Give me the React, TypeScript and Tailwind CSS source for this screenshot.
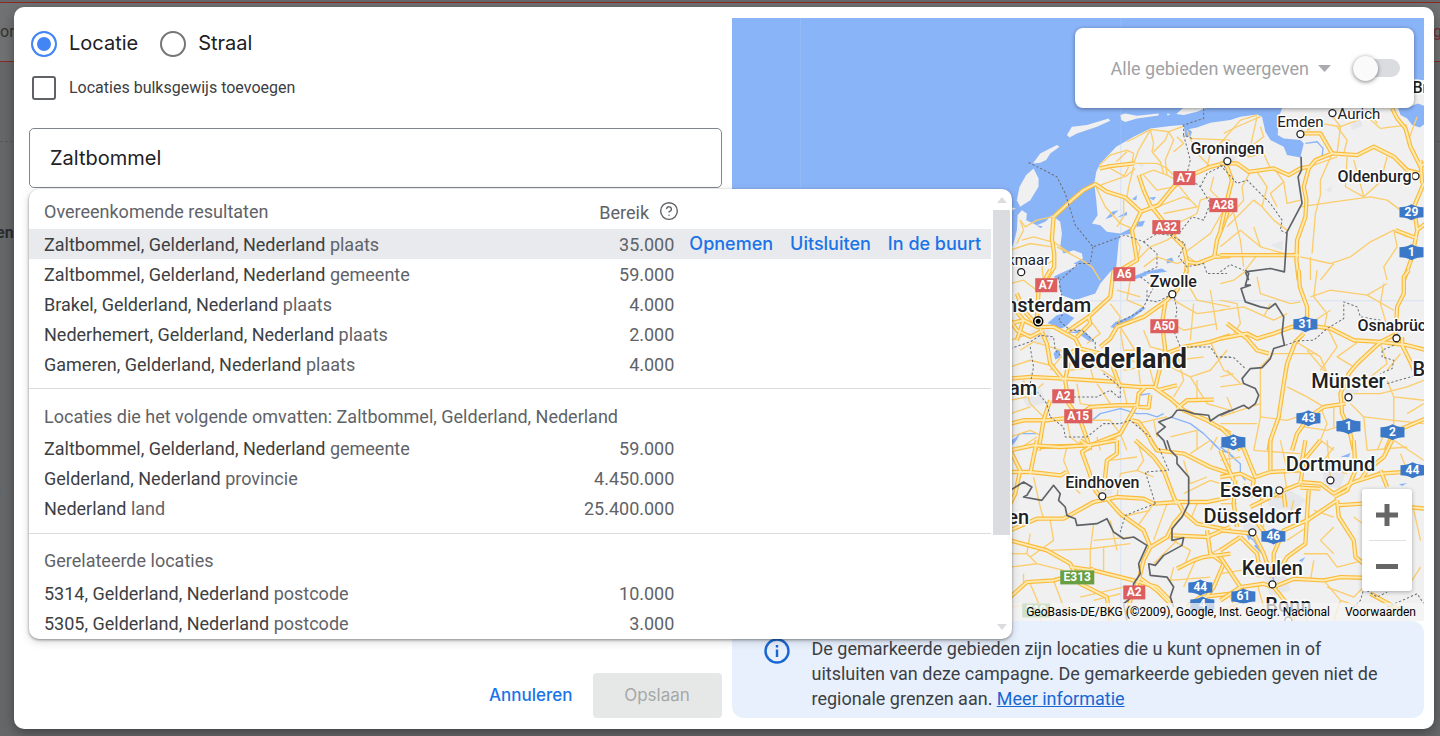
import React, { useState } from 'react';
import { HelpCircle } from "lucide-react";

interface Tile {
  x: number;
  y: number;
  highways: string[];
  roads: string[];
  borders: string[];
  provinces: string[];
  rivers: string[];
  lakes: string[];
}

interface Place {
  name: string;
  x: number;
  y: number;
  size: number;
  weight?: number;
  anchor?: "start" | "middle" | "end";
  dot?: [number, number];
}

interface Shield {
  label: string;
  x: number;
  y: number;
  kind: "red" | "blue" | "green";
}

interface Result {
  name: string;
  type: string;
  reach: string;
}

// Tile coordinates are in thirds of a map unit
const tiles: Tile[] = [
  {
    x: 1010,
    y: 100,
    highways: [
      "130,350 190,295 220,270 255,252 290,275 345,292 392,335 365,390 380,480 345,500 310,525",
      "268,205 300,198 372,190",
      "385,225 400,270 420,315 460,365 490,410 520,440 530,485 526,540",
      "392,335 445,315 490,260 520,235 600,200 640,190 660,190",
      "130,350 125,415 132,460 132,500 105,545",
      "660,310 640,370 620,420 612,470",
      "530,485 560,490 612,470 660,468",
    ],
    roads: [
      "268,195 300,165 350,150 370,160 365,190", "318,185 350,155", "300,205 345,230 375,205",
      "375,190 440,190 470,205 500,235", "390,225 430,210 470,225 500,240", "350,125 380,110 420,88 475,95",
      "370,190 385,150 420,90", "420,88 430,130 425,155 450,185 460,220", "430,155 465,120 475,95 520,78",
      "475,95 490,120 465,180 470,225", "490,155 520,130 500,110", "530,90 540,115 660,120",
      "255,255 285,320 330,370 365,385", "340,290 340,350 320,380", "370,200 355,260 350,290",
      "270,255 340,230 355,200", "400,225 440,270 490,260", "440,320 520,290 540,300 500,250",
      "460,340 560,320 540,300", "490,410 500,370 560,340 570,300 600,290", "610,230 600,270 630,300 660,290",
      "560,490 520,460 600,400 640,330", "380,480 420,440 470,420 500,400", "400,500 440,470 500,490 526,480",
      "380,480 390,440 370,410", "30,360 45,380 80,360 125,350", "20,430 40,390 30,360",
      "35,420 70,410 125,425", "0,450 60,430 125,440", "100,540 95,500 130,480", "130,425 180,460",
      "140,440 215,480 245,500 270,540", "640,120 600,160 590,200", "540,115 560,160 600,200",
    ],
    borders: [],
    provinces: [
      "55,187 140,230 165,280 195,375 248,440 345,405 400,425 440,400 480,405 510,395 545,350 580,360 600,310 570,260 530,230",
      "248,440 240,490 205,490 150,540", "520,105 540,180 530,220",
      "580,25 580,55 520,75 520,105 545,115", "570,260 590,220 640,195 660,230",
      "400,425 440,460 440,500 400,520", "480,405 525,430 505,470 530,500 580,490 590,520 650,520",
    ],
    rivers: [],
    lakes: [
      "365,297 380,285 378,300", "415,293 437,290 430,300", "285,357 305,335 325,330 305,350",
      "320,352 350,335 350,345", "382,365 404,362 397,378 378,380", "468,478 485,472 490,485 470,490",
      "78,375 97,378 92,384", "520,75 545,95 540,110 525,108", "400,515 455,505 470,515 410,522",
    ],
  },
  {
    x: 1220,
    y: 0,
    highways: [
      "0,490 50,490 85,515 160,505 205,525 240,505 265,500",
      "515,325 530,355 555,385 570,440 600,500 612,490",
      "230,400 300,400 335,460 285,480 265,505 250,560 258,600 255,650 230,720 228,780 235,840",
      "335,460 410,465 460,440 520,470 560,510 600,520", "0,765 235,765",
      "0,690 20,600 35,540 20,500", "615,670 590,690 575,770 550,840", "610,550 580,620 590,690",
      "600,480 605,550", "525,690 590,715",
    ],
    roads: [
      "0,430 60,360 110,345", "10,400 50,380 120,350", "30,450 90,440 110,350", "90,440 130,410 120,380",
      "0,455 45,430 85,470 130,460 150,505", "90,515 65,560 70,600 0,680", "110,515 140,560 125,620 160,660 200,690",
      "165,510 190,545 150,580 170,620", "190,545 200,610 240,600", "240,770 330,790 390,770 450,725 520,690 560,710",
      "520,690 530,740 490,800 500,840", "265,500 350,470", "300,585 285,640 275,760", "240,620 340,605 450,590 500,600 540,630 570,660",
      "380,470 375,560 430,590 480,545 500,470", "335,460 300,540 300,585", "350,380 380,420 370,460",
      "260,390 300,370 360,380 440,350 480,385 560,375", "30,600 60,720 70,800", "0,740 60,690 120,740 190,760",
      "100,680 120,740", "20,680 100,600 125,620", "330,340 360,380 350,460", "430,590 400,480",
      "270,770 270,840", "340,790 300,840", "590,350 560,430", "75,810 110,765", "445,330 470,370",
    ],
    borders: ["242,470 243,510 233,530 245,610 200,695 192,815 150,805 75,815 85,840"],
    provinces: ["0,495 50,550 80,540 150,610 185,660 180,690 200,700", "0,815 30,793 70,810"],
    rivers: ["255,430 290,425 308,445 305,468"],
    lakes: ["532,322 560,322 592,310 612,318 612,372 598,382 575,375 560,355 540,345"],
  },
  {
    x: 1010,
    y: 270,
    highways: [
      "310,0 300,80 235,140 170,185", "0,160 40,150 80,170 130,170 195,205 210,235 270,250",
      "0,150 20,180 60,200 100,180", "90,175 110,220 120,280 160,330", "0,325 60,320 160,325 240,330 320,335",
      "320,345 385,350 430,350 480,385 520,420 590,450 660,490", "270,230 300,205 320,170 400,140 470,90 500,60 530,0",
      "465,95 455,160 465,240 450,290 435,350", "465,250 520,230 600,215 660,195", "300,270 330,350",
      "200,235 180,250 165,330 175,400 210,450 235,520 240,540", "380,410 385,370 405,350",
      "420,375 415,412 385,410", "380,405 320,405 240,410 200,440 110,450 40,450 0,460",
      "120,390 100,450 85,540", "80,530 240,525 330,490 375,410", "365,450 385,455 410,490 440,540",
      "500,415 530,390 610,388", "440,360 500,345", "0,100 40,150 20,210", "120,0 85,60 80,150",
      "20,70 40,120 80,165", "235,140 240,160 200,200",
    ],
    roads: [
      "0,210 60,190", "30,240 70,215 120,230", "0,290 60,270 120,285", "40,330 60,400 110,450", "0,390 50,380 100,340",
      "160,250 120,300", "230,250 250,330", "180,300 260,290 320,330", "240,150 270,190 230,220", "300,100 330,140 320,170",
      "330,0 360,30 350,90", "350,90 400,110", "320,60 390,80", "400,180 420,230 460,240", "330,180 340,240 400,240",
      "330,170 380,250 390,340", "340,300 450,280", "500,250 520,330 490,380", "480,290 540,320 600,300 650,240",
      "540,320 590,400 660,420", "600,215 640,300 660,310", "520,20 560,90 660,110", "490,90 560,130 640,120",
      "470,150 520,180 620,160", "550,100 540,210", "600,60 620,180", "0,500 60,480 100,500", "20,540 80,500",
      "240,450 300,450 330,490", "260,500 270,540", "330,490 350,540", "380,460 470,440", "480,500 560,480 560,540",
      "620,500 600,540", "430,450 440,500", "0,430 60,410", "260,340 300,400", "340,355 350,400", "0,40 40,30 80,60",
      "170,450 180,500 220,530", "60,350 0,370", "200,340 210,400 270,410", "560,330 560,390", "500,270 580,260",
      "410,260 430,340", "270,250 330,260 390,280", "120,230 180,250",
    ],
    borders: ["660,420 625,435 600,452 595,435 550,430 520,420 500,420 485,440 445,455 465,470 440,490 460,510 470,540"],
    provinces: [
      "145,20 155,80 165,120 145,150 180,180 215,180 255,215 255,240", "0,235 60,215 90,195 130,200 135,240 165,270",
      "60,230 70,290 60,340 110,400 120,440", "190,380 260,380 300,360 330,385 330,350 280,310",
      "120,440 160,470 165,500 230,500 280,460 330,460 360,450 420,500",
      "390,20 430,50 410,90 440,95 490,70 500,120 490,180 510,230 600,230 620,260 660,260", "410,60 410,90 395,120 320,160",
    ],
    rivers: [
      "240,455 270,430 330,415 380,430 410,430 440,440 460,430", "0,520 30,490 80,490", "480,440 540,460 580,490 620,530",
      "165,185 215,188 250,215", "385,375 420,370",
    ],
    lakes: [
      "112,158 140,135 165,128 192,143 180,155 165,170 150,175", "300,170 315,155 360,138 398,108 405,115 365,145 315,175",
      "130,250 140,238 150,240 148,262 135,268", "360,22 405,5 410,15 365,30", "0,510 25,500 15,515 0,530",
      "190,180 220,180 250,210 240,215",
    ],
  },
  {
    x: 1220,
    y: 270,
    highways: [
      "235,0 238,50 260,110 260,160", "0,205 80,190 110,205 160,190 215,170 260,165 330,175 400,210 480,215 520,220 560,225 620,240",
      "250,190 225,215 200,280 190,340 175,440 150,510 145,540", "565,0 550,20 550,70 530,110 525,200",
      "545,200 545,225 570,275 580,300", "480,215 410,280 385,310 360,370 365,430 385,470 400,540",
      "375,400 310,410 265,440 230,490 215,540", "615,445 520,485 495,540", "0,470 40,510 60,540",
      "20,160 80,205 110,240 145,250", "480,215 520,195",
    ],
    roads: [
      "0,40 40,30 80,0", "0,90 50,100 60,160 40,190", "110,20 120,70 210,100 240,95", "0,120 70,110 160,150 200,130",
      "130,140 150,100", "270,80 330,60 440,75 500,40", "440,75 520,120", "290,0 280,80 320,130 310,180", "490,40 480,100 500,170",
      "260,240 320,310 300,260 220,210", "150,250 290,250", "320,310 370,350", "200,350 260,380 310,410",
      "160,250 120,290 120,440 100,540", "0,350 70,340", "120,400 0,440", "120,440 200,450 230,440", "110,460 0,460",
      "20,300 60,340", "270,160 330,120", "420,210 350,260 400,290", "480,220 500,280 450,320 490,330",
      "500,330 520,380 520,480", "400,370 480,370 560,350 610,330", "430,440 520,450 610,460", "390,400 430,440 440,540",
      "300,410 320,460 300,510 340,540", "250,470 320,480 350,470", "520,380 610,390", "540,250 500,300", "560,430 610,400",
      "0,320 40,310", "320,170 350,230 300,300", "340,400 340,470", "470,540 500,470", "20,380 40,430",
    ],
    borders: [
      "75,0 85,10 75,45 90,45 62,55 75,95 120,110 145,115 165,100 190,140 185,190 192,225 160,235 150,265 125,292 90,295 65,325 70,340 105,355 115,375 105,400 85,415 70,405 0,435",
    ],
    provinces: [
      "195,225 230,212 280,210 320,175 370,145 370,95 410,110 420,140 480,150", "520,225 485,240 485,260 520,270 515,295 480,310",
      "500,340 570,320 610,310", "0,260 40,262 75,295",
    ],
    rivers: [],
    lakes: [],
  },
  {
    x: 1010,
    y: 440,
    highways: [
      "80,0 60,100", "0,30 70,15 150,20 235,15 320,0", "0,95 60,95 150,105 170,95", "0,30 30,90 15,160 0,190",
      "210,0 240,20 215,35 235,90 255,150 270,170", "320,0 320,40 290,60 280,150", "375,0 430,50 460,90 490,170 500,190",
      "420,0 440,30 520,40 600,80 660,100", "0,270 80,235 160,235 250,185 320,170 400,175 430,190 510,185 590,185 660,170",
      "290,175 330,220 400,270 420,320 400,360 385,420 360,480 350,520", "420,320 470,290 490,250 520,215 500,180",
      "520,215 560,250 660,270", "480,285 590,290 660,260", "0,300 110,330 180,370 210,430 290,470 300,540",
      "180,380 250,390 370,420 440,440 480,480", "0,470 50,425 130,420 250,385", "500,385 550,360 580,350 660,340",
      "590,270 600,340 635,365", "640,370 610,440 580,480", "385,410 440,450 480,490", "530,500 570,470 660,460",
    ],
    roads: [
      "60,350 130,300 120,240", "60,280 50,340 80,370", "0,380 80,370 160,390", "120,330 240,325 360,310",
      "250,250 240,330 240,400", "280,320 280,400", "300,240 320,330", "60,430 90,500 90,540", "130,420 160,500 220,520",
      "250,480 330,460", "210,470 340,440", "70,110 90,200 100,235", "170,120 210,160", "320,170 330,100 380,90 430,110",
      "300,60 380,50", "430,190 380,260", "470,190 430,300", "330,230 420,210", "520,60 540,130 590,110", "540,40 600,0",
      "520,160 600,120 660,140", "560,190 540,240", "430,370 500,300", "490,380 480,420 600,410", "560,350 520,440",
      "600,340 660,310", "380,0 400,60 380,90", "0,340 50,340", "0,500 90,490 150,530", "470,290 540,330 520,380",
      "180,110 160,60 170,20", "40,400 40,430", "250,300 360,290", "640,200 610,240",
    ],
    borders: [
      "470,0 480,30 500,50 500,70 535,110 535,190 515,230 485,265 485,300 520,292 515,315 460,345 435,375 415,370 420,405 470,410 490,440 480,470 490,500",
      "0,150 40,125 65,140 50,165 40,170 95,180 130,135 150,160 145,180 165,200 170,225 195,235 200,255 260,250 290,235 310,275 340,295 370,290 410,315 385,370 390,400 370,430 365,470 340,490 350,540",
    ],
    provinces: ["435,190 405,95 475,90 445,20", "435,190 345,225 330,275"],
    rivers: ["600,0 630,30 660,38", "0,35 20,20"],
    lakes: [],
  },
  {
    x: 1220,
    y: 440,
    highways: [
      "150,0 150,90", "60,0 105,110 150,95 240,90", "240,90 255,0", "300,0 250,60 240,130", "400,0 405,90 380,150 340,170",
      "0,110 60,100 100,120 90,170", "90,200 190,150 240,130", "235,125 300,130 340,160", "240,142 300,145",
      "340,160 400,125 480,100 615,90", "515,0 490,50 440,90 420,120", "0,270 100,280", "45,120 40,190 50,260",
      "0,330 60,290", "100,280 130,340 155,410", "60,290 110,340 120,400", "0,350 40,410 60,440", "0,480 60,440 130,430 155,440",
      "160,410 160,340 190,270 260,240 350,180", "265,150 260,220 255,310 200,350 170,400", "350,180 355,230 400,300 405,350 430,370",
      "350,195 425,190", "160,440 220,415 310,420 360,410 425,412", "160,440 200,490 220,540", "480,90 500,140",
      "560,200 615,205", "450,460 550,515", "0,30 40,120", "190,160 195,200", "105,240 150,300",
    ],
    roads: [
      "300,70 380,100", "340,20 310,60", "440,30 560,20", "250,340 320,340 350,380 430,360", "340,260 300,300 340,340",
      "280,360 270,420", "310,420 360,480 420,500", "400,230 440,260", "580,210 600,300", "575,420 600,380", "0,60 60,50",
      "20,0 30,80", "0,190 50,190", "0,230 60,230", "190,90 200,150", "120,170 130,260", "200,300 260,260",
      "0,400 60,390 120,410", "30,470 60,540", "110,430 130,500", "240,500 260,540", "360,480 340,540", "540,40 560,90",
      "100,30 240,40", "180,0 200,90", "320,0 330,120", "280,210 340,230", "520,0 610,60", "430,440 400,470 320,440",
      "70,130 120,170 190,170", "205,240 220,180", "0,510 80,480",
    ],
    borders: [],
    provinces: ["380,520 420,480 430,445 470,470 500,455", "500,500 590,460 610,490"],
    rivers: ["30,45 60,70 60,100 75,120", "75,280 100,300 130,345", "155,400 165,440 190,480", "0,20 40,50"],
    lakes: ["75,275 95,285 85,300", "100,315 120,310 132,345 118,335", "360,50 390,38 385,50", "235,360 255,350 245,365", "535,132 560,128 545,137"],
  },
];

// Coastline and islands, same scale as the first tile
const land = [
  "252,250 258,215 270,190 318,140 370,110 420,85 480,78 515,75 530,88 560,82 600,68 660,60 690,50 740,43 755,50 765,95 780,120 820,140 830,165 870,172 880,130 870,120 820,115 802,105 805,50 815,25 820,-60 1242,-60 1242,1570 -10,1570 -10,480 10,430 20,390 22,345 35,330 50,340 48,360 80,375 105,365 125,345 150,365 155,400 150,440 160,460 190,450 215,460 218,475 190,490 205,495 150,520 130,530 150,545 145,560 155,585 195,600 225,590 255,580 270,550 300,515 318,500 325,425 330,405 372,400 360,385 330,400 290,395 270,375 245,370 262,345 258,300",
  "70,205 85,235 85,260 60,300 30,320 20,300 28,260 48,225",
  "68,190 90,160 140,135 148,140 120,160 108,180 90,188",
  "170,105 185,80 230,75 295,55 300,62 260,80 200,100 178,112",
  "330,45 345,40 380,47 445,40 445,46 380,55 345,66 333,60",
  "470,40 480,42 472,47",
  "498,42 520,22 585,12 585,25 560,35 520,45",
  "0,320 17,325 3,332",
];

const urban = [
  "1264,495 1290,490 1306,500 1296,510 1270,508", "1030,330 1048,325 1052,340 1036,345", "1020,395 1040,388 1046,402 1028,408",
  "1342,380 1356,378 1358,392 1346,396", "1262,572 1284,566 1290,590 1270,596", "1240,512 1262,515 1260,530 1244,534",
  "1322,470 1345,472 1340,488 1324,486", "1094,482 1112,480 1112,494 1098,496", "1138,164 1144,163 1142,168",
  "1350,125 1360,118 1362,126 1352,130", "1325,190 1331,186 1331,193", "1390,320 1402,322 1400,334 1388,332",
  "1224,150 1238,152 1234,162 1222,160", "1270,245 1283,240 1282,250",
];

const places: Place[] = [
  { name: "Bremen", x: 1412, y: 93, size: 16, weight: 500, anchor: "start" },
  { name: "Emden", x: 1300, y: 127, size: 15, dot: [1300, 134] },
  { name: "Aurich", x: 1337, y: 119, size: 15, anchor: "start", dot: [1332, 113] },
  { name: "Groningen", x: 1227, y: 154, size: 16, weight: 500, dot: [1227, 161] },
  { name: "Oldenburg", x: 1411, y: 182, size: 16, weight: 500, anchor: "end", dot: [1415, 176] },
  { name: "Zwolle", x: 1173, y: 287, size: 16, weight: 500, dot: [1172, 294] },
  { name: "Alkmaar", x: 1049, y: 265, size: 15, anchor: "end", dot: [1021, 272] },
  { name: "Amsterdam", x: 1091, y: 312, size: 20, weight: 500, anchor: "end" },
  { name: "Rotterdam", x: 1037, y: 395, size: 20, weight: 500, anchor: "end" },
  { name: "Eindhoven", x: 1102, y: 488, size: 16, weight: 500, dot: [1102, 496] },
  { name: "Antwerpen", x: 1029, y: 524, size: 20, weight: 500, anchor: "end" },
  { name: "Osnabrück", x: 1357, y: 331, size: 16, weight: 500, anchor: "start", dot: [1396, 338] },
  { name: "Münster", x: 1348, y: 388, size: 20, weight: 500, dot: [1348, 397] },
  { name: "Bielefeld", x: 1412, y: 376, size: 20, weight: 500, anchor: "start" },
  { name: "Dortmund", x: 1330, y: 471, size: 20, weight: 500, dot: [1330, 480] },
  { name: "Essen", x: 1273, y: 497, size: 20, weight: 500, anchor: "end", dot: [1279, 490] },
  { name: "Düsseldorf", x: 1252, y: 523, size: 20, weight: 500, dot: [1252, 532] },
  { name: "Keulen", x: 1272, y: 575, size: 20, weight: 500, dot: [1272, 584] },
  { name: "Bonn", x: 1288, y: 612, size: 20, weight: 500, dot: [1288, 620] },
  { name: "Nederland", x: 1124, y: 368, size: 27, weight: 700 },
];

const shields: Shield[] = [
  { label: "A7", x: 1184, y: 178, kind: "red" },
  { label: "A28", x: 1223, y: 205, kind: "red" },
  { label: "A32", x: 1166, y: 227, kind: "red" },
  { label: "A6", x: 1124, y: 274, kind: "red" },
  { label: "A7", x: 1046, y: 285, kind: "red" },
  { label: "A50", x: 1164, y: 326, kind: "red" },
  { label: "A2", x: 1063, y: 396, kind: "red" },
  { label: "A15", x: 1078, y: 416, kind: "red" },
  { label: "A2", x: 1134, y: 592, kind: "red" },
  { label: "E313", x: 1077, y: 577, kind: "green" },
  { label: "E19", x: 1036, y: 610, kind: "green" },
  { label: "29", x: 1411, y: 212, kind: "blue" },
  { label: "1", x: 1411, y: 252, kind: "blue" },
  { label: "31", x: 1305, y: 324, kind: "blue" },
  { label: "43", x: 1308, y: 418, kind: "blue" },
  { label: "1", x: 1348, y: 426, kind: "blue" },
  { label: "2", x: 1392, y: 432, kind: "blue" },
  { label: "3", x: 1233, y: 442, kind: "blue" },
  { label: "44", x: 1412, y: 470, kind: "blue" },
  { label: "46", x: 1273, y: 536, kind: "blue" },
  { label: "4", x: 1202, y: 604, kind: "blue" },
  { label: "44", x: 1200, y: 587, kind: "blue" },
  { label: "61", x: 1243, y: 596, kind: "blue" },
];

const matches: Result[] = [
  { name: "Zaltbommel, Gelderland, Nederland", type: "plaats", reach: "35.000" },
  { name: "Zaltbommel, Gelderland, Nederland", type: "gemeente", reach: "59.000" },
  { name: "Brakel, Gelderland, Nederland", type: "plaats", reach: "4.000" },
  { name: "Nederhemert, Gelderland, Nederland", type: "plaats", reach: "2.000" },
  { name: "Gameren, Gelderland, Nederland", type: "plaats", reach: "4.000" },
];

const enclosing: Result[] = [
  { name: "Zaltbommel, Gelderland, Nederland", type: "gemeente", reach: "59.000" },
  { name: "Gelderland, Nederland", type: "provincie", reach: "4.450.000" },
  { name: "Nederland", type: "land", reach: "25.400.000" },
];

const related: Result[] = [
  { name: "5314, Gelderland, Nederland", type: "postcode", reach: "10.000" },
  { name: "5305, Gelderland, Nederland", type: "postcode", reach: "3.000" },
];

const shieldFill = { red: "#dd5e5e", blue: "#3c78c8", green: "#689f43" };

const RoadShield: React.FC<{ shield: Shield }> = ({ shield }) => {
  const { label, x, y, kind } = shield;
  const w = label.length * 6 + 10;
  return (
    <g>
      {kind === "blue" ? (
        <path
          d={`M${x - 12} ${y - 5}Q${x - 5} ${y - 5} ${x} ${y - 8}Q${x + 5} ${y - 5} ${x + 12} ${y - 5}V${y + 5}Q${x + 5} ${y + 5} ${x} ${y + 8}Q${x - 5} ${y + 5} ${x - 12} ${y + 5}Z`}
          fill={shieldFill.blue}
        />
      ) : (
        <rect x={x - w / 2} y={y - 7} width={w} height={14} fill={shieldFill[kind]} />
      )}
      <text x={x} y={y + 4} textAnchor="middle" fontSize={12} fontWeight={700} fill="#fff">
        {label}
      </text>
    </g>
  );
};

const MapCanvas = () => (
  <svg
    className="absolute inset-0 h-full w-full bg-[#8ab4f8]"
    viewBox="732 18 692 603"
    preserveAspectRatio="xMaxYMin slice"
    role="img"
    aria-label="Kaart van Nederland"
    fontFamily="Roboto, sans-serif"
  >
    <g transform="translate(1010 100) scale(0.33333)" fill="#f0f0f0">
      {land.map((points) => <polygon key={points} points={points} />)}
    </g>
    <g fill="#e6e7ea">
      {urban.map((points) => <polygon key={points} points={points} />)}
    </g>
    <g stroke="#a9c8f8" strokeOpacity="0.35">
      <path d="M800.5 18V621M1120.5 18V621M1010 300.5H1424" />
    </g>
    {tiles.map((tile) => (
      <g
        key={`${tile.x}-${tile.y}`}
        transform={`translate(${tile.x} ${tile.y}) scale(0.33333)`}
        fill="none"
        strokeLinejoin="round"
      >
        {tile.lakes.map((p) => <polygon key={p} points={p} fill="#8ab4f8" />)}
        {tile.rivers.map((p) => <polyline key={p} points={p} stroke="#8ab4f8" strokeWidth="4" />)}
        {tile.roads.map((p) => <polyline key={p} points={p} stroke="#fbcd6c" strokeWidth="4" />)}
        {tile.highways.map((p) => <polyline key={p} points={p} stroke="#fbbb3a" strokeWidth="13" />)}
        {tile.highways.map((p) => <polyline key={p} points={p} stroke="#fee9b0" strokeWidth="6" />)}
        {tile.provinces.map((p) => (
          <polyline key={p} points={p} stroke="#6b6f75" strokeWidth="3" strokeDasharray="7 6" />
        ))}
        {tile.borders.map((p) => <polyline key={p} points={p} stroke="#5f6368" strokeWidth="5" />)}
      </g>
    ))}
    {shields.map((s) => <RoadShield key={`${s.x}-${s.y}`} shield={s} />)}
    {places.map(({ name, x, y, size, weight = 400, anchor = "middle", dot }) => (
      <g key={name}>
        {dot && <circle cx={dot[0]} cy={dot[1]} r="3.500" fill="#fff" stroke="#202124" strokeWidth="1.300" />}
        <text
          x={x}
          y={y}
          fontSize={size}
          fontWeight={weight}
          textAnchor={anchor}
          fill="#202124"
          stroke="#fff"
          strokeWidth="3"
          strokeLinejoin="round"
          paintOrder="stroke"
        >
          {name}
        </text>
      </g>
    ))}
    <circle cx="1038" cy="321" r="4.500" fill="#fff" stroke="#000" strokeWidth="1.500" />
    <circle cx="1038" cy="321" r="2.500" />
  </svg>
);

const ResultRow: React.FC<{ result: Result; active?: boolean }> = ({ result, active = false }) => (
  <tr className={active ? "h-[30px] bg-[#e8eaed]" : "h-[30px]"}>
    <td className="pt-px pl-[15px] text-[#3c4043]">
      {result.name} <span className="text-[#5f6368]">{result.type}</span>
    </td>
    <td className="pt-px text-right">{result.reach}</td>
    <td className="pl-[15px]">
      {active && (
        <div className="flex gap-[17px] font-[Inter,sans-serif] text-[18px] font-medium whitespace-nowrap text-[#1a73e8]">
          <button type="button">Opnemen</button>
          <button type="button">Uitsluiten</button>
          <button type="button">In de buurt</button>
        </div>
      )}
    </td>
  </tr>
);

const ResultTable: React.FC<{ title: string; results: Result[]; first?: boolean }> = ({ title, results, first = false }) => (
  <table className={first ? "w-full table-fixed" : "mt-[9px] w-full table-fixed border-t border-[#dadce0]"}>
    <colgroup>
      <col />
      <col className="w-[120px]" />
      <col className="w-[317px]" />
    </colgroup>
    <thead>
      <tr className={first ? "h-10" : "h-[45px]"}>
        <th scope="col" className={first ? "pt-[6px] pl-[15px] text-left font-normal" : "pt-[11px] pl-[15px] text-left font-normal whitespace-nowrap"}>
          {title}
        </th>
        <th scope="col" colSpan={2} className="pt-[8px] pl-[45px] text-left font-normal">
          {first && (
            <span className="flex items-start gap-[10px]">
              Bereik <HelpCircle className="h-5 w-5" strokeWidth={1.7} />
            </span>
          )}
        </th>
      </tr>
    </thead>
    <tbody>
      {results.map((result, i) => (
        <ResultRow key={`${result.name}-${result.type}`} result={result} active={first && i === 0} />
      ))}
    </tbody>
  </table>
);

const ResultsDropdown = () => (
  <div className="absolute top-full left-0 z-10 mt-px flex h-[450px] w-[142%] overflow-hidden rounded-[10px] bg-white text-[18px] leading-6 text-[#5f6368] shadow-[0_1px_3px_rgba(0,0,0,0.4),0_3px_8px_rgba(60,64,67,0.2)]">
    <div className="min-w-0 flex-1">
      <ResultTable title="Overeenkomende resultaten" results={matches} first />
      <ResultTable title="Locaties die het volgende omvatten: Zaltbommel, Gelderland, Nederland" results={enclosing} />
      <ResultTable title="Gerelateerde locaties" results={related} />
    </div>
    <div className="flex w-[21px] flex-col items-center" aria-hidden="true">
      <div className="flex h-[21px] items-center">
        <svg width="10" height="6" viewBox="0 0 10 6" fill="#dadce0"><path d="M0 6L5 0L10 6Z" /></svg>
      </div>
      <div className="h-[325px] w-[17px] bg-[#dadce0]" />
      <div className="mt-auto flex h-6 items-center">
        <svg width="10" height="6" viewBox="0 0 10 6" fill="#dadce0"><path d="M0 0L5 6L10 0Z" /></svg>
      </div>
    </div>
  </div>
);

// Dimmed page behind the dialog, only its outer edges show
const Backdrop = () => (
  <div aria-hidden="true" className="absolute inset-0 overflow-hidden bg-[#666769] font-[Roboto,sans-serif] text-[16px]">
    <div className="mt-[2px] flex h-[60px] items-center justify-between border-y border-[#8c2a24] bg-[#707172]">
      <span className="text-[#333436]">ord</span>
      <span className="w-[7px] text-[#7a2a34]">ge</span>
    </div>
    <div className="mt-[79px] border-t border-dashed border-[#57585a]" />
    <div className="mt-[79px] -ml-1 font-bold text-[#2b2c2e]">en</div>
    <div className="mt-[232px] -ml-2 text-[#1f4a78]">n</div>
  </div>
);

const App = () => {
  const [mode, setMode] = useState("locatie");
  const [bulk, setBulk] = useState(false);
  const [query, setQuery] = useState("Zaltbommel");

  const radioClass =
    "mt-0.5 h-[26px] w-[26px] appearance-none rounded-full border-2 border-[#757575] checked:border-[#4285f4] checked:bg-[#4285f4] checked:shadow-[inset_0_0_0_4px_#fff]";

  return (
    <div className="relative flex min-h-screen pt-[7px] pr-[6px] pb-[7px] pl-[14px] font-[Roboto,sans-serif] text-[#202124]">
      <Backdrop />
      <div
        role="dialog"
        aria-label="Locaties"
        className="relative grid flex-1 grid-cols-2 gap-[10px] rounded-[10px] bg-white py-[11px] pr-[10px] pl-[15px] shadow-[0_4px_12px_rgba(0,0,0,0.35)]"
      >
        <form className="flex flex-col" onSubmit={(e) => e.preventDefault()}>
          <div className="mt-[11px] flex gap-[22px] pl-0.5 font-[Inter,sans-serif] text-[20px] leading-[26px]">
            <label className="flex items-center gap-3">
              <input type="radio" name="mode" className={radioClass} checked={mode === "locatie"} onChange={() => setMode("locatie")} />
              Locatie
            </label>
            <label className="flex items-center gap-3">
              <input type="radio" name="mode" className={radioClass} checked={mode === "straal"} onChange={() => setMode("straal")} />
              Straal
            </label>
          </div>
          <label className="mt-[19px] flex h-6 items-center gap-[13px] pl-[3px] text-[16px] text-[#3c4043]">
            <input
              type="checkbox"
              className="h-6 w-6 appearance-none rounded-[3px] border-2 border-[#5f6368] checked:bg-[#4285f4]"
              checked={bulk}
              onChange={(e) => setBulk(e.target.checked)}
            />
            Locaties bulksgewijs toevoegen
          </label>
          <div className="relative mt-7">
            <input
              type="text"
              aria-label="Locatie zoeken"
              className="block h-[60px] w-full rounded-[5px] border border-[#80868b] px-5 font-[Inter,sans-serif] text-[20px] outline-none"
              value={query}
              onChange={(e) => setQuery(e.target.value)}
            />
            <ResultsDropdown />
          </div>
          <div className="mt-auto flex justify-end gap-5 font-[Inter,sans-serif] text-[17px] font-medium">
            <button type="button" className="text-[#1a73e8]">Annuleren</button>
            <button type="submit" disabled className="h-[45px] w-[129px] rounded-[4px] bg-[#e6e8e7] font-normal text-[#a5a7a8]">
              Opslaan
            </button>
          </div>
        </form>

        <div className="flex flex-col">
          <div className="relative min-h-[500px] flex-1 overflow-hidden">
            <MapCanvas />
            <div className="absolute top-[10px] right-[10px] flex h-20 w-[339px] items-center justify-end gap-[22px] rounded-[8px] bg-white pr-[14px] shadow-[0_1px_4px_rgba(0,0,0,0.4)]">
              <button type="button" className="flex items-center gap-[9px] text-[18px] text-[#a0a2a5]">
                Alle gebieden weergeven
                <svg width="13" height="7" viewBox="0 0 13 7" fill="#a9abae"><path d="M0 0H13L6.500 7Z" /></svg>
              </button>
              <button type="button" role="switch" aria-checked="false" aria-label="Gebieden weergeven" className="flex h-[18px] w-[47px] items-center rounded-full bg-[#dadce0]">
                <span className="h-[25px] w-[25px] rounded-full bg-[#fafafa] shadow-[0_1px_4px_rgba(0,0,0,0.5)]" />
              </button>
            </div>
            <div className="absolute right-[12px] bottom-[30px] flex w-[50px] flex-col items-center rounded-[3px] bg-white shadow-[0_1px_4px_rgba(0,0,0,0.3)]">
              <button type="button" aria-label="Inzoomen" className="flex h-[51px] w-full items-center justify-center">
                <svg width="22" height="24" viewBox="0 0 22 24" fill="#666"><path d="M0 9.500H8.500V1H13.500V9.500H22V14.500H13.500V23H8.500V14.500H0Z" /></svg>
              </button>
              <div className="h-px w-[37px] bg-[#e0e0e0]" />
              <button type="button" aria-label="Uitzoomen" className="flex h-[50px] w-full items-center justify-center">
                <svg width="22" height="5" viewBox="0 0 22 5" fill="#666"><path d="M0 0H22V5H0Z" /></svg>
              </button>
            </div>
            <div className="absolute right-0 bottom-0 flex h-[18px] items-center gap-[15px] bg-[#f5f5f5]/75 pr-2 pl-5 text-[12px] text-black">
              <span>GeoBasis-DE/BKG (©2009), Google, Inst. Geogr. Nacional</span>
              <a href="#voorwaarden">Voorwaarden</a>
            </div>
          </div>
          <div className="flex gap-[22px] rounded-[12px] bg-[#e8f0fe] pt-[15px] pr-8 pb-[7px] pl-8 text-[18px] leading-[25px] text-[#3c4043]">
            <svg className="mt-0.5 shrink-0" width="26" height="26" viewBox="0 0 26 26" fill="none" stroke="#1967d2" strokeWidth="2.400">
              <circle cx="13" cy="13" r="11.500" />
              <path d="M13 11.500V19M13 7V9.500" />
            </svg>
            <p>
              De gemarkeerde gebieden zijn locaties die u kunt opnemen in of uitsluiten van deze campagne. De gemarkeerde
              gebieden geven niet de regionale grenzen aan.{" "}
              <a href="#meer-informatie" className="text-[#1967d2] underline">Meer informatie</a>
            </p>
          </div>
        </div>
      </div>
    </div>
  );
};

export default App;
